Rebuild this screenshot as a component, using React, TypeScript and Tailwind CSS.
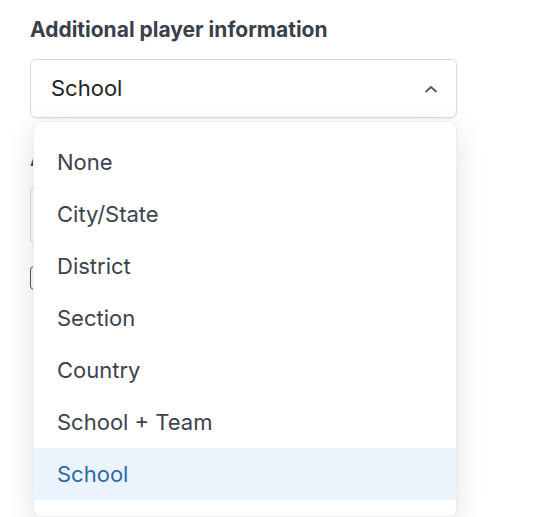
import React from "react";

const items = ["None", "City/State", "District", "Section", "Country", "School + Team", "School"];

export default function App() {
  return (
    <div className="w-[534px] h-[517px] overflow-hidden bg-white" style={{ fontFamily: "Inter, 'Noto Sans', sans-serif" }}>
      <div className="pl-[30px] pt-[17px] w-[457px]">
        <div className="text-[21px] leading-[26px] font-bold text-[#3a3f4b]">Additional player information</div>
        <div className="relative mt-[16px]">
          <div className="h-[59px] rounded-[6px] border border-[#d9dbe0] flex items-center justify-between pl-[20px] pr-[15px] shadow-[0_1px_2px_rgba(0,0,0,0.06)]">
            <span className="text-[22px] text-[#222]">School</span>
            <svg width="16" height="12" viewBox="0 0 16 12" className="mr-[2px] mt-[2px]">
              <path d="M2.5 8 L8 3 L13.5 8" fill="none" stroke="#555" strokeWidth="1.8" />
            </svg>
          </div>
          <div className="absolute left-[3px] right-0 top-[62px] z-10 bg-white rounded-[8px] border border-[#eceef1] shadow-[0_8px_28px_rgba(0,0,0,0.12)] pt-[14px] pb-[16px]">
            {items.map((it, i) => (
              <div
                key={it}
                className={
                  "h-[52px] flex items-center pl-[23px] text-[22px] " +
                  (i === items.length - 1 ? "bg-[#ebf3fc] text-[#2f69a8]" : "text-[#3d424d]")
                }
              >
                {it}
              </div>
            ))}
          </div>
          <div className="mt-[30px] text-[19px] leading-[24px] font-bold text-[#3a3f4b]">Additional team information</div>
          <div className="mt-[14px] h-[58px] rounded-[6px] border border-[#d9dbe0]"></div>
          <div className="mt-[22px] w-[24px] h-[24px] rounded-[4px] border border-[#555]"></div>
        </div>
      </div>
    </div>
  );
}
